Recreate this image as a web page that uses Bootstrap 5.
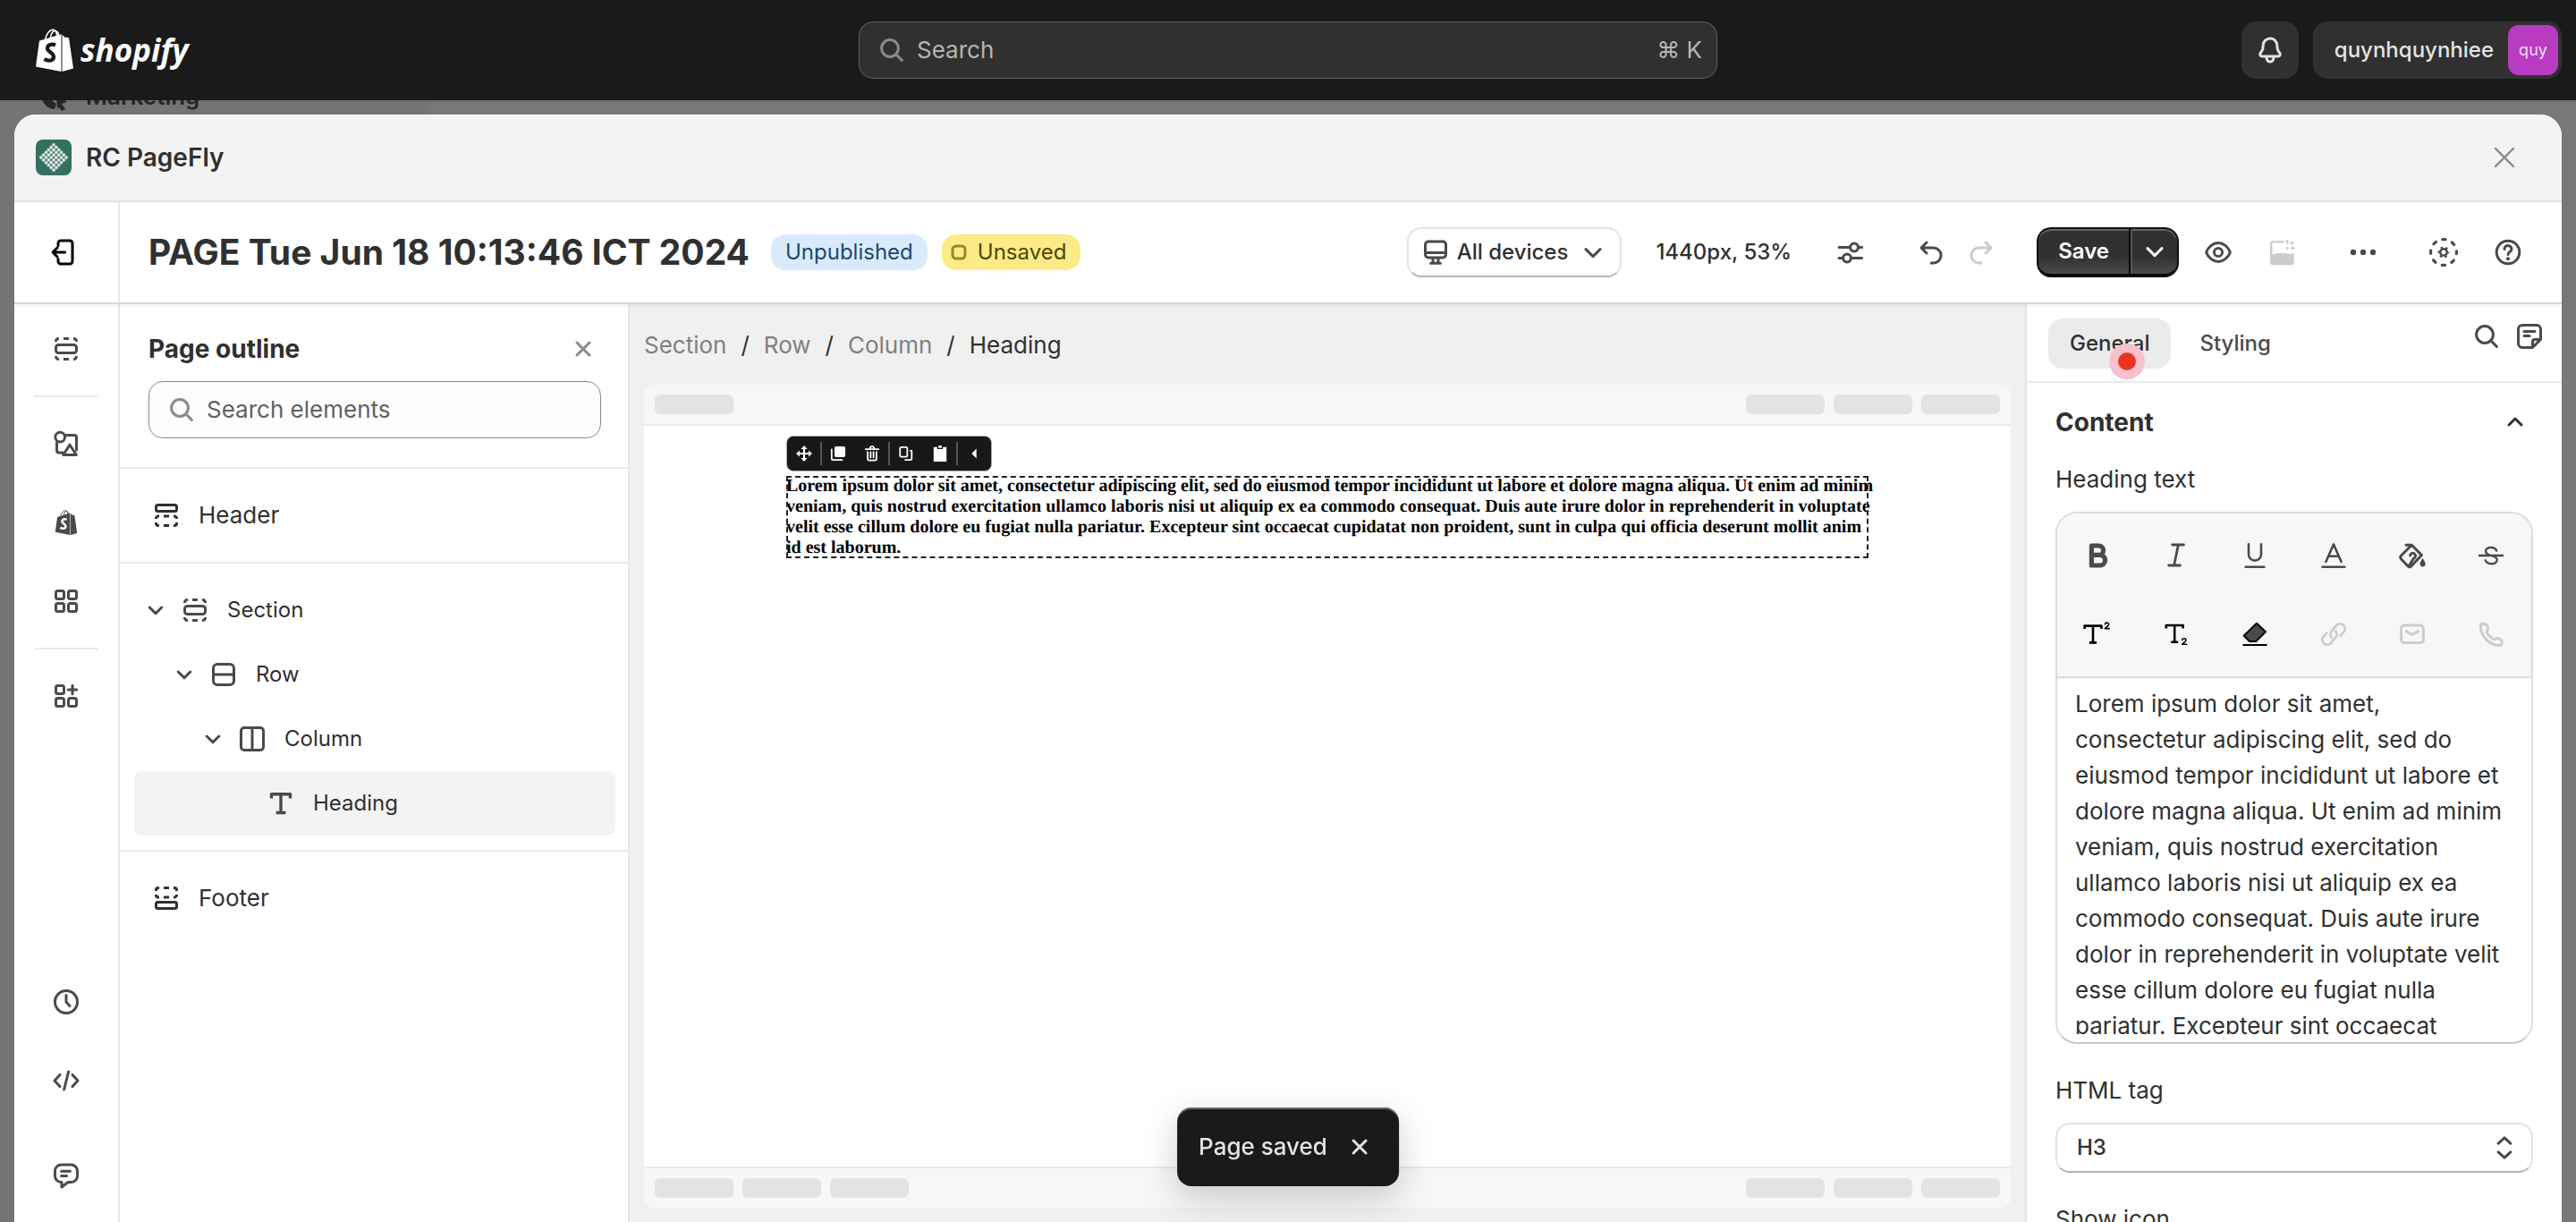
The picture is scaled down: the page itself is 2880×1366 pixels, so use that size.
<!DOCTYPE html>
<html lang="en">
<head>
<meta charset="utf-8">
<meta name="viewport" content="width=device-width, initial-scale=1">
<title>RC PageFly</title>
<link href="https://cdn.jsdelivr.net/npm/bootstrap@5.3.0/dist/css/bootstrap.min.css" rel="stylesheet">
<style>
:root{--ink:#303030;--icon:#4a4a4a;--line:#ebebeb;--muted:#8a8a8a}
body{font-family:Inter,"Liberation Sans",sans-serif;font-size:26px;line-height:32px;color:var(--ink);background:#787878;height:100vh;overflow:hidden}
h1,h2,p{margin:0}
button{color:inherit;font:inherit;background:none;border:0;padding:0}
a{color:inherit;text-decoration:none}
.ico{width:40px;height:40px;flex:none;fill:none;stroke:currentColor;stroke-width:1.5;stroke-linecap:round;stroke-linejoin:round;display:block}
.solid{fill:currentColor;stroke:none}
.t24{font-size:24px}
.fw-mid{font-weight:500}
.gray{color:var(--muted)}
.dim{color:var(--icon)}
/* top bar */
.topbar{height:112px;background:#1a1a1a;padding:0 16px;color:#e3e3e3;display:grid;grid-template-columns:1fr 960px 1fr;flex:none}
.wordmark{font:italic 700 35px/44px "Open Sans",sans-serif;color:#fff}
.top-search{height:64px;border:1px solid #616161;border-radius:16px;background:#303030;padding:0 16px;color:#b5b5b5}
.top-search input,.find-box input{background:none;border:0;outline:0;min-width:0;padding:0;color:inherit}
.top-search input::placeholder{color:#b5b5b5;opacity:1}
.top-btn{height:64px;border-radius:16px;background:#303030}
.bell{width:64px}
.avatar-sq{width:56px;height:56px;border-radius:12px;background:#b83bc1;color:#f6def8;font-size:18px}
/* page behind the dialog */
.backstrip{height:16px;overflow:hidden;background:linear-gradient(#6e6e6e 0 2px,#787878 2px);flex:none;color:#262626;font-weight:600}
.backnav{width:480px;background:linear-gradient(#6c6c6c 0 2px,#747474 2px);padding:0 0 4px 42px}
/* dialog */
.dialog-app{margin:0 16px;background:#fff;border-radius:24px 24px 0 0;overflow:hidden;min-height:0}
.dialog-edge{background:linear-gradient(90deg,#747474 50%,#787878 50%);min-height:0}
.dialog-head{height:98px;background:#f3f3f3;border-bottom:2px solid #e1e1e1;padding:0 44px 0 24px;flex:none}
.app-name{font-weight:600;font-size:28px}
.toolbar-app{height:112px;box-shadow:0 2px 0 #d6d6d6,0 4px 4px rgba(0,0,0,.06);z-index:2;flex:none;padding-right:32px}
.rail-cell{width:118px;border-right:2px solid #e7e7e7;flex:none}
.page-title{font-size:39px;line-height:48px;font-weight:650}
.pill{height:40px;border-radius:16px;padding:0 16px;line-height:40px;font-size:24px}
.pill-info{background:#d9eafd;color:#20496b}
.pill-warn{background:#fceb87;color:#4f4700;padding-left:0}
.pill-warn .ico{color:#998a1c}
.device-btn{height:56px;border-radius:16px;border:2px solid #e3e3e3;border-bottom-color:#b5b5b5;padding:0 10px;font-size:24px;font-weight:500}
.sq{width:56px;height:56px;border-radius:16px;display:flex;align-items:center;justify-content:center;color:var(--icon)}
.tool-gap{gap:34px}
.save-group{height:56px;border-radius:16px;overflow:hidden;color:#fff;background:linear-gradient(#303030 60%,#4b4b4b);border:2px solid #111;border-bottom:4px solid #0a0a0a;box-shadow:inset 0 2px 0 #666}
.save-group .go{padding:0 22px;border-right:2px solid #0c0c0c;font-size:24px;font-weight:600}
.save-group .more{width:52px;border-left:2px solid #555}
/* rail */
.rail{padding:24px 0}
.rail-tools{gap:32px}
.rail-last{margin-top:18px}
.rail hr{width:72px;margin:0;border:0;border-top:2px solid var(--line);opacity:1}
.rail .after-rule{margin:24px 0}
/* outline */
.outline{width:570px;border-right:2px solid #e7e7e7;flex:none}
.outline-top{padding:32px 30px 32px 32px;border-bottom:2px solid var(--line)}
.h-panel{font-size:28px;line-height:40px;font-weight:700}
.find-box{height:64px;border:1px solid #8a8a8a;border-radius:16px;background:#fdfdfd;padding:0 16px;color:#616161;margin-top:16px}
.find-box input::placeholder{color:#616161;opacity:1}
.tree-block{padding:16px 14px 16px 16px;border-bottom:2px solid var(--line)}
.tree-block:last-child{border:0}
.tree-item{height:72px;border-radius:8px;width:100%;text-align:left;padding-left:16px}
.tree-item.on{background:#f3f3f3}
.tree-item .chev{width:20px;height:20px;margin-right:-2px}
.tree-item.lvl-a{padding-left:14px}
.tree-item.lvl-b{padding-left:46px}
.tree-item.lvl-c{padding-left:78px}
.tree-item.lvl-d{padding-left:144px}
/* canvas */
.canvas{background:#f0f0f0;padding:24px 16px 16px;min-width:0}
.crumbs{height:48px;color:#808080;gap:16px;margin:0 0 20px;padding:0;list-style:none}
.crumbs .sep,.crumbs .here{color:var(--ink)}
.frame{background:#fff;border-radius:12px;overflow:hidden}
.frame-bar{height:46px;background:#f7f7f7;padding:0 12px;gap:10px;flex:none}
.frame-bar.at-top{border-bottom:2px solid var(--line)}
.frame-bar.at-end{border-top:2px solid var(--line)}
.frame-bar i{width:88px;height:22px;border-radius:6px;background:#e3e3e3}
.preview{padding:56px 159px 0;position:relative}
.float-tools{position:absolute;left:159px;top:11px;height:40px;border-radius:8px;background:#17181a;border:1px solid #aaa;color:#fff}
.float-tools button{width:38px;height:38px;display:flex;align-items:center;justify-content:center}
.float-tools .ico{width:18px;height:18px}
.float-tools .cut{border-left:2px solid #55565a;height:26px;margin:0 -1px}
.sel-box{outline:2px dashed #222;outline-offset:-2px}
.sel-text{font:700 20px/23px "Liberation Serif",serif;color:#000;margin-right:-8px;text-rendering:geometricPrecision}
/* inspector */
.inspector{width:600px;border-left:2px solid #e3e3e3;flex:none;overflow:hidden}
.tabs-app{height:90px;padding:18px 16px 0 24px;border-bottom:2px solid var(--line);gap:8px;flex:none}
.tab-btn{height:56px;border-radius:16px;padding:0 24px;font-size:24px;font-weight:500;color:var(--icon);position:relative}
.tab-btn.on{background:#ebebeb;color:var(--ink)}
.click-dot{position:absolute;left:68px;top:28px;width:40px;height:40px;border-radius:50%;background:#f6c1cd}
.click-dot::after{content:"";position:absolute;inset:10px;border-radius:50%;background:#ec3323}
.form-app{padding:24px 32px 0}
.form-app label{display:block}
.form-head{margin-bottom:28px}
.form-gap{margin-top:36px}
.editor{border:2px solid #dcdcdc;border-bottom-color:#c9c9c9;border-radius:24px;overflow:hidden;margin-top:20px}
.editor-tools{background:#f7f7f7;border-bottom:2px solid #dcdcdc;display:grid;grid-template-columns:repeat(6,88px);justify-content:center;padding:3px 0}
.editor-tools button{height:88px;display:flex;align-items:center;justify-content:center;color:var(--icon)}
.editor-tools .ink{color:#000}
.editor-tools .off,.off{color:#cccccc}
.editor textarea{display:block;width:100%;height:398px;border:0;outline:0;resize:none;overflow:hidden;padding:9px 18px 0 20px;line-height:40px;color:inherit;margin-bottom:9px}
.pick{height:56px;border:2px solid #e3e3e3;border-bottom-color:#b5b5b5;border-radius:16px;margin-top:20px;padding-right:10px;color:var(--icon)}
.pick select{appearance:none;border:0;background:none;outline:0;padding:0 0 0 22px;font-size:24px;font-weight:500;color:var(--ink);height:100%}
/* toast */
.toast-app{position:fixed;left:50%;transform:translateX(-50%);bottom:40px;height:88px;border-radius:16px;background:#1a1a1a;color:#e3e3e3;padding:0 24px;gap:16px;box-shadow:inset 0 2px 0 #666,0 12px 40px rgba(0,0,0,.2);z-index:5;font-weight:500}
</style>
<script src="https://cdn.jsdelivr.net/npm/bootstrap@5.3.0/dist/js/bootstrap.bundle.min.js"></script>
</head>
<body class="d-flex flex-column">

<svg class="d-none" aria-hidden="true">
  <symbol id="i-search" viewBox="0 0 20 20"><circle cx="9" cy="9" r="4.7"/><path d="M12.6 12.6l3.1 3.1"/></symbol>
  <symbol id="i-x" viewBox="0 0 20 20"><path d="M6.5 6.5l7 7M13.5 6.5l-7 7"/></symbol>
  <symbol id="i-xl" viewBox="0 0 20 20"><path stroke-width="1.2" d="M5 5l10 10M15 5L5 15"/></symbol>
  <symbol id="i-down" viewBox="0 0 20 20"><path d="M6 8.300l4 4 4-4"/></symbol>
  <symbol id="i-up" viewBox="0 0 20 20"><path d="M6.500 11.500l3.500-3.500 3.500 3.500"/></symbol>
  <symbol id="i-chev" viewBox="0 0 10 10"><path d="M1.600 3.500l3.400 3.400 3.400-3.400"/></symbol>
  <symbol id="i-section" viewBox="0 0 20 20"><rect x="4.250" y="7.750" width="11.500" height="4.500" rx="1.500"/><path stroke-linecap="butt" d="M4.250 6v-.25a1.500 1.500 0 0 1 1.500-1.500H6M8.500 4.250h3M14 4.250h.25a1.500 1.500 0 0 1 1.500 1.500V6M4.250 14v.25a1.500 1.500 0 0 0 1.500 1.500H6M8.500 15.750h3M14 15.750h.25a1.500 1.500 0 0 0 1.500-1.500V14"/></symbol>
  <symbol id="i-header" viewBox="0 0 20 20"><rect x="4.250" y="4.250" width="11.500" height="3.500" rx="1"/><path stroke-linecap="butt" d="M4.250 12v-.25a1.200 1.200 0 0 1 1.200-1.200H6M8.500 10.500h3M14 10.500h.55a1.200 1.200 0 0 1 1.200 1.200V12M4.250 14v.5a1.250 1.250 0 0 0 1.250 1.250H6M8.500 15.750h3M14 15.750h.5a1.250 1.250 0 0 0 1.250-1.250V14"/></symbol>
  <symbol id="i-footer" viewBox="0 0 20 20"><rect x="4.250" y="12.250" width="11.500" height="3.500" rx="1"/><path stroke-linecap="butt" d="M4.250 6v-.5A1.250 1.250 0 0 1 5.500 4.250H6M8.500 4.250h3M14 4.250h.5a1.250 1.250 0 0 1 1.250 1.250V6M4.250 8v.3a1.200 1.200 0 0 0 1.200 1.200H6M8.500 9.500h3M14 9.500h.55a1.200 1.200 0 0 0 1.200-1.200V8"/></symbol>
  <symbol id="i-row" viewBox="0 0 20 20"><rect x="4.250" y="4.250" width="11.500" height="11.500" rx="2.250"/><path d="M4.250 10h11.500"/></symbol>
  <symbol id="i-col" viewBox="0 0 20 20"><rect x="3.750" y="3.750" width="12.500" height="12.500" rx="1.750"/><path d="M10 3.750v12.500"/></symbol>
  <symbol id="i-text" viewBox="0 0 20 20"><path stroke-linecap="butt" d="M4.750 7.300V4.850h10.500V7.300M10 4.850v10.400M7.300 15.250h5.400" stroke-width="1.700"/></symbol>
  <symbol id="i-shapes" viewBox="0 0 20 20"><circle cx="6.600" cy="6.300" r="2.700"/><path d="M9.700 5.250h4.800a1.250 1.250 0 0 1 1.250 1.250v7M4.750 9.500v4.300a1.250 1.250 0 0 0 1.250 1.250h2.200M12 10.600l3.700 5.650H8.400z"/></symbol>
  <symbol id="i-grid" viewBox="0 0 20 20"><rect x="4.250" y="4.250" width="4.500" height="4.500" rx="1"/><rect x="11.250" y="4.250" width="4.500" height="4.500" rx="1"/><rect x="4.250" y="11.250" width="4.500" height="4.500" rx="1"/><rect x="11.250" y="11.250" width="4.500" height="4.500" rx="1"/></symbol>
  <symbol id="i-gridplus" viewBox="0 0 20 20"><rect x="4.250" y="4.250" width="4.500" height="4.500" rx="1"/><path d="M13.500 4.100v4.800M11.100 6.500h4.800"/><rect x="4.250" y="11.250" width="4.500" height="4.500" rx="1"/><rect x="11.250" y="11.250" width="4.500" height="4.500" rx="1"/></symbol>
  <symbol id="i-bag" viewBox="0 0 42 48"><path d="M4 13.500l24.500-7.300V48L0 42.500z" fill="currentColor" stroke="none"/><path d="M29.500 6.500l2.500 3 5 .8 5 34.200L29.500 48z" fill="currentColor" stroke="none"/><path d="M10.500 13C11.500 6 15.500 1.200 19 1.200S24 6 23.700 9M16.500 10c.5-5 3-8 5.500-7.500s3.500 2.500 3.500 5.500" fill="none" stroke="currentColor" stroke-width="1.600"/><path d="M22 18.500c-4-2-9-.5-9 3.500s7 4.500 7 9.500c0 4.500-6 5.500-10.500 2.500" fill="none" stroke-width="4.200" stroke-linecap="butt"/></symbol>
  <symbol id="i-clock" viewBox="0 0 20 20"><circle cx="10" cy="10" r="6.250"/><path d="M10 6.300V10l2 2.200"/></symbol>
  <symbol id="i-code" viewBox="0 0 20 20"><path d="M6.500 6.700L3.500 10l3 3.300M13.500 6.700l3 3.300-3 3.300M11.300 5L8.800 15"/></symbol>
  <symbol id="i-chat" viewBox="0 0 20 20"><path d="M7.500 13.750h-.2A3.500 3.500 0 0 1 3.750 10.250V7.500A3.500 3.500 0 0 1 7.250 4h5.500a3.500 3.500 0 0 1 3.500 3.500v2.750a3.500 3.500 0 0 1-3.500 3.500H11L7.500 16.500z"/><path d="M7.300 7.600h4.900M7.300 10.300h3"/></symbol>
  <symbol id="i-exit" viewBox="0 0 20 20"><path d="M7.500 6.300V5a1.500 1.500 0 0 1 1.500-1.500h5A1.500 1.500 0 0 1 15.500 5v10a1.500 1.500 0 0 1-1.500 1.500H9A1.500 1.500 0 0 1 7.500 15v-1.300M11.300 10H4.600M7 7.500L4.500 10 7 12.500"/></symbol>
  <symbol id="i-bell" viewBox="0 0 20 20"><path d="M10 3.500a3.900 3.900 0 0 0-3.900 3.700l-.15 1.900c-.05.6-.25 1-.6 1.500l-.75 1.100c-.5.800 0 1.800.9 1.800h9c.900 0 1.400-1 .9-1.800l-.75-1.100c-.35-.5-.55-.9-.6-1.500l-.15-1.900A3.900 3.900 0 0 0 10 3.500zM8.100 13.600v1a1.900 1.900 0 0 0 3.800 0v-1"/></symbol>
  <symbol id="i-monitor" viewBox="0 0 20 20"><rect x="4.250" y="4" width="11.500" height="9" rx="1.750"/><path d="M4.300 10.200h11.400M8.500 13.500v2M11.500 13.500v2M7.300 16.100h5.400"/></symbol>
  <symbol id="i-sliders" viewBox="0 0 20 20"><path d="M3.500 7.250h6.200M14.500 7.250h1.800M3.500 13.250h2M10.800 13.250h5.500"/><circle cx="12" cy="7.250" r="2.200"/><circle cx="8" cy="13.250" r="2.200"/></symbol>
  <symbol id="i-undo" viewBox="0 0 20 20"><path d="M7.500 4.500L4.500 7.500l3 3M4.700 7.500h6.600a4.200 4.200 0 0 1 0 8.500h-1.200"/></symbol>
  <symbol id="i-redo" viewBox="0 0 20 20"><path d="M12.500 4.500l3 3-3 3M15.300 7.500H8.700a4.200 4.200 0 0 0 0 8.500h1.200"/></symbol>
  <symbol id="i-eye" viewBox="0 0 20 20"><path d="M3.300 10c1.100-2.900 3.700-5.200 6.700-5.200s5.600 2.300 6.700 5.200c-1.100 2.900-3.700 5.200-6.700 5.200S4.400 12.900 3.300 10z"/><circle cx="10" cy="10" r="2.300"/></symbol>
  <symbol id="i-pic" viewBox="0 0 20 20"><path stroke-width="1.200" stroke-linecap="butt" d="M11 4.200H4.600a1 1 0 0 0-1 1V14M15.700 14v-3.500"/><path class="solid" d="M3 11.900c3.500-2 9.700-2 13.300 0v4a1.200 1.200 0 0 1-1.200 1.200H4.200A1.200 1.200 0 0 1 3 15.900z"/><path stroke-width="1.300" stroke-linecap="butt" d="M12.600 3v2.300M16 4l-1.600 1.500M14.600 7.700h2M12 7.700h1.300"/></symbol>
  <symbol id="i-dots" viewBox="0 0 20 20"><circle class="solid" cx="4.500" cy="10" r="1.600"/><circle class="solid" cx="10" cy="10" r="1.600"/><circle class="solid" cx="15.500" cy="10" r="1.600"/></symbol>
  <symbol id="i-gear" viewBox="0 0 20 20"><circle cx="10" cy="10" r="7.200" stroke-width="1.600" stroke-dasharray="1.700 3.955" stroke-dashoffset=".85"/><circle cx="10" cy="10" r="1.900" stroke-width="1.300"/><circle cx="10" cy="10" r="2.800" stroke-width="1" stroke-linecap="butt" stroke-dasharray="1.200 1.732" stroke-dashoffset=".6"/></symbol>
  <symbol id="i-help" viewBox="0 0 20 20"><circle cx="10" cy="10" r="6.400"/><path d="M8 8.200c0-2.700 4-2.500 4 0 0 1.500-2 1.500-2 3.100"/><circle class="solid" cx="10" cy="13.600" r="1"/></symbol>
  <symbol id="i-note" viewBox="0 0 20 20"><path d="M11.700 16.250H6A2.250 2.250 0 0 1 3.750 14V6A2.250 2.250 0 0 1 6 3.750h8A2.250 2.250 0 0 1 16.250 6v5.700zM11.750 16v-3a1.250 1.250 0 0 1 1.250-1.250h3M7 7.250h6M7 9.750h3"/></symbol>
  <symbol id="i-updown" viewBox="0 0 20 20"><path d="M6.600 7.600L10 4.400l3.400 3.200M6.600 12.400l3.400 3.200 3.400-3.200"/></symbol>
  <symbol id="i-bold" viewBox="0 0 20 20"><path stroke-width="2.600" d="M6.700 4.500h4a2.600 2.600 0 0 1 0 5.200h-4zM6.700 9.700h4.700a2.900 2.900 0 0 1 0 5.800H6.700z"/></symbol>
  <symbol id="i-italic" viewBox="0 0 20 20"><path stroke-width="1.400" d="M7.800 4h6.400M5.800 15.500h6.400M11.200 4L8.800 15.500"/></symbol>
  <symbol id="i-under" viewBox="0 0 20 20"><path stroke-width="1.300" d="M6.500 3.700v5.600a3.500 3.500 0 0 0 7 0V3.700M4.800 16.400h10.400"/></symbol>
  <symbol id="i-color" viewBox="0 0 20 20"><path stroke-width="1.300" d="M5.700 13.500L10 3.700l4.300 9.800M7.200 10.400h5.600M3.800 16.400h12.400"/></symbol>
  <symbol id="i-fill" viewBox="0 0 20 20"><path d="M6.500 4.100h3.200l5.500 5.700-5.800 6.200a1.300 1.300 0 0 1-1.800 0L3.800 12a1.500 1.500 0 0 1 0-2l5-5M11 11.500a1.500 1.500 0 1 0-2.200-1.500M8.300 15.500l2.500-4"/><path class="solid" d="M15.800 11.500c.8 1.300 1.500 2.200 1.500 3.300a1.500 1.500 0 0 1-3 0c0-1.100.7-2 1.500-3.300z"/></symbol>
  <symbol id="i-strike" viewBox="0 0 20 20"><path stroke-width="1.200" stroke-linecap="butt" d="M3 10h14M13.200 7.800C12.800 4.800 7 4.800 7 7.600c0 3.200 6.400 1.800 6.400 4.800 0 3-6.400 3-6.600-.2"/></symbol>
  <symbol id="i-sup" viewBox="-1.200 0 20 20"><path stroke-width="1.300" stroke-linecap="butt" d="M1.600 7V5.300h9.400V7M6.300 5.300v9.500M4.300 14.700h4"/><path stroke-width=".8" d="M13 4.400c.2-1.200 2.200-1 2.100.1 0 .8-1.300 1.200-2.100 2.300h2.400"/></symbol>
  <symbol id="i-sub" viewBox="-1.200 0 20 20"><path stroke-width="1.300" stroke-linecap="butt" d="M3.200 6.700V5h9.400v1.700M7.900 5v9.500M5.900 14.400h4"/><path stroke-width=".8" d="M12.200 13.200c.2-1.200 2.200-1 2.100.1 0 .8-1.300 1.200-2.100 2.300h2.400"/></symbol>
  <symbol id="i-erase" viewBox="0 0 20 20"><path d="M11 3.900l5 4.700-5.400 5.400H7l-3.200-3.200z" fill="#4a4a4a" stroke-width="1"/><path stroke-width="1" d="M3.600 16h12.800"/></symbol>
  <symbol id="i-link" viewBox="0 0 20 20"><path stroke-width="1.400" d="M8.800 11.700a2.800 2.800 0 0 1 .3-3.700l2.500-3a2.700 2.700 0 0 1 4 3.800l-1.800 2M11.200 8.300a2.800 2.800 0 0 1-.3 3.700l-2.500 3a2.700 2.700 0 0 1-4-3.800l1.800-2"/></symbol>
  <symbol id="i-mail" viewBox="0 0 20 20"><rect x="3.800" y="5" width="12.400" height="9.800" rx="1.700"/><path d="M6.600 8.300L10 10.200l3.400-1.900"/></symbol>
  <symbol id="i-phone" viewBox="0 0 20 20"><path d="M4.200 5.300c-.2 5.700 5 11 10.500 10.900.9 0 1.300-.6 1.400-1.500.1-1.500-.4-1.900-1.500-2.300-1.600-.6-2 .3-2.700.4-1.200.1-4.300-3-4.200-4.200.1-.7 1-1.200.4-2.700-.4-1.100-.8-1.800-2.300-1.800-1 0-1.600.4-1.600 1.200z"/></symbol>
  <symbol id="i-move" viewBox="0 0 20 20"><path class="solid" d="M10 0l4 4.500h-2.800v4.300h4.300V6L20 10l-4.500 4v-2.800h-4.300v4.300H14L10 20l-4-4.500h2.800v-4.300H4.500V14L0 10l4.500-4v2.800h4.300V4.500H6z"/></symbol>
  <symbol id="i-dup" viewBox="0 0 20 20"><rect class="solid" x="5.500" y="1" width="13.500" height="13.500" rx="2"/><path stroke-width="2" d="M2 5v11a2 2 0 0 0 2 2h11"/></symbol>
  <symbol id="i-trash" viewBox="0 0 20 20"><path stroke-width="2" d="M2 4.500h16M7.500 3.500c0-3 5-3 5 0M4.500 8v8.500a2 2 0 0 0 2 2h7a2 2 0 0 0 2-2V8M8.200 8v7M11.800 8v7"/></symbol>
  <symbol id="i-copy" viewBox="0 0 20 20"><rect x="2.500" y="2" width="9" height="12" rx="1.500" stroke-width="2"/><path stroke-width="2" d="M15.500 6.500h1.500v10a1.500 1.500 0 0 1-1.500 1.500H9"/></symbol>
  <symbol id="i-paste" viewBox="0 0 20 20"><path class="solid" d="M2 2h4.500v2.500h7V2H18v18H2z"/><rect class="solid" x="8" y="0" width="4" height="3"/></symbol>
  <symbol id="i-left" viewBox="0 0 20 20"><path class="solid" d="M13 4v12l-6-6z"/></symbol>
</svg>

<header class="topbar align-items-center">
  <a href="#" class="d-flex align-items-center gap-2 ps-4" aria-label="Shopify home">
    <svg class="text-white" width="42" height="48" viewBox="0 0 42 48"><use href="#i-bag" stroke="#1a1a1a"/></svg>
    <span class="wordmark">shopify</span>
  </a>
  <label class="top-search d-flex align-items-center gap-2">
    <svg class="ico gray"><use href="#i-search"/></svg>
    <input class="flex-grow-1" type="text" placeholder="Search" aria-label="Search">
    <span>⌘ K</span>
  </label>
  <div class="d-flex justify-content-end gap-3">
    <button class="top-btn bell d-flex align-items-center justify-content-center" aria-label="Notifications"><svg class="ico"><use href="#i-bell"/></svg></button>
    <button class="top-btn fw-mid t24 d-flex align-items-center gap-3 ps-4 pe-1">quynhquynhiee<span class="avatar-sq d-flex align-items-center justify-content-center fw-normal">quy</span></button>
  </div>
</header>

<div class="backstrip d-flex">
  <div class="backnav d-flex align-items-end gap-3">
    <svg width="38" height="34" viewBox="0 0 38 34" fill="#262626"><path d="M5 18a14 14 0 0 0 14 14l2-6-4-3-4-5z"/><path d="M21 16l12 8-6 2 4 6-4 2-4-5-1 5z"/></svg>
    <span>Marketing</span>
  </div>
</div>

<div class="dialog-edge d-flex flex-column flex-grow-1">
<main class="dialog-app d-flex flex-column flex-grow-1">
  <div class="dialog-head d-flex align-items-center">
    <svg width="40" height="40" viewBox="0 0 40 40"><defs><pattern id="weave" x="8" y="8" width="4" height="4" patternUnits="userSpaceOnUse"><circle cx="2" cy="2" r="1.700" fill="#fff"/></pattern></defs><rect width="40" height="40" rx="8" fill="#356f60"/><rect x="8" y="8" width="24" height="24" transform="rotate(45 20 20)" fill="url(#weave)"/></svg>
    <span class="app-name ms-3 me-auto">RC PageFly</span>
    <button class="gray" aria-label="Close"><svg class="ico"><use href="#i-xl"/></svg></button>
  </div>

  <div class="toolbar-app d-flex align-items-stretch position-relative">
    <div class="rail-cell d-flex align-items-center justify-content-center pe-2"><button class="text-black" aria-label="Exit"><svg class="ico"><use href="#i-exit"/></svg></button></div>
    <div class="d-flex align-items-center gap-3 ps-4 ms-2 me-auto">
      <h1 class="page-title me-2">PAGE Tue Jun 18 10:13:46 ICT 2024</h1>
      <span class="pill pill-info">Unpublished</span>
      <span class="pill pill-warn d-flex align-items-center"><svg class="ico" viewBox="0 0 40 40"><rect x="12" y="13" width="14" height="14" rx="4" stroke-width="3"/></svg>Unsaved</span>
    </div>
    <div class="d-flex align-items-center tool-gap">
      <button class="device-btn d-flex align-items-center"><svg class="ico me-1 dim"><use href="#i-monitor"/></svg>All devices<svg class="ico ms-2 dim"><use href="#i-down"/></svg></button>
      <span class="t24 fw-mid px-1">1440px, 53%</span>
      <button class="sq" aria-label="Settings"><svg class="ico"><use href="#i-sliders"/></svg></button>
      <div class="d-flex">
        <button class="sq" aria-label="Undo"><svg class="ico"><use href="#i-undo"/></svg></button>
        <button class="sq off" aria-label="Redo" disabled><svg class="ico"><use href="#i-redo"/></svg></button>
      </div>
      <div class="d-flex gap-3">
        <div class="save-group d-flex">
          <button class="go">Save</button>
          <button class="more d-flex align-items-center justify-content-center" aria-label="More save actions"><svg class="ico"><use href="#i-down"/></svg></button>
        </div>
        <button class="sq" aria-label="Preview"><svg class="ico"><use href="#i-eye"/></svg></button>
        <button class="sq off" aria-label="Image optimizer" disabled><svg class="ico"><use href="#i-pic"/></svg></button>
      </div>
      <button class="sq" aria-label="More"><svg class="ico"><use href="#i-dots"/></svg></button>
      <div class="d-flex gap-3">
        <button class="sq" aria-label="Page settings"><svg class="ico"><use href="#i-gear"/></svg></button>
        <button class="sq" aria-label="Help"><svg class="ico"><use href="#i-help"/></svg></button>
      </div>
    </div>
  </div>

  <div class="d-flex flex-grow-1 overflow-hidden">
    <nav class="rail rail-cell d-flex flex-column align-items-center">
      <button class="sq" aria-label="Outline"><svg class="ico"><use href="#i-section"/></svg></button>
      <hr class="after-rule">
      <div class="rail-tools d-flex flex-column">
        <button class="sq" aria-label="Elements"><svg class="ico"><use href="#i-shapes"/></svg></button>
        <button class="sq" aria-label="Shopify elements"><svg width="26" height="28" viewBox="0 0 42 48"><use href="#i-bag" stroke="#fff"/></svg></button>
        <button class="sq" aria-label="Apps"><svg class="ico"><use href="#i-grid"/></svg></button>
      </div>
      <hr class="after-rule">
      <button class="sq" aria-label="Add apps"><svg class="ico"><use href="#i-gridplus"/></svg></button>
      <div class="rail-tools d-flex flex-column mt-auto">
        <button class="sq" aria-label="History"><svg class="ico"><use href="#i-clock"/></svg></button>
        <button class="sq" aria-label="Code"><svg class="ico"><use href="#i-code"/></svg></button>
        <button class="sq rail-last" aria-label="Feedback"><svg class="ico"><use href="#i-chat"/></svg></button>
      </div>
    </nav>

    <aside class="outline">
      <div class="outline-top">
        <div class="d-flex align-items-center justify-content-between">
          <h2 class="h-panel">Page outline</h2>
          <button class="gray" aria-label="Close outline"><svg class="ico"><use href="#i-x"/></svg></button>
        </div>
        <label class="find-box d-flex align-items-center gap-2">
          <svg class="ico gray"><use href="#i-search"/></svg>
          <input class="flex-grow-1" type="text" placeholder="Search elements" aria-label="Search elements">
        </label>
      </div>
      <div class="tree-block"><button class="tree-item d-flex align-items-center gap-3"><svg class="ico"><use href="#i-header"/></svg>Header</button></div>
      <div class="tree-block t24">
        <button class="tree-item lvl-a d-flex align-items-center gap-3"><svg class="ico chev dim"><use href="#i-chev"/></svg><svg class="ico dim"><use href="#i-section"/></svg>Section</button>
        <button class="tree-item lvl-b d-flex align-items-center gap-3"><svg class="ico chev dim"><use href="#i-chev"/></svg><svg class="ico dim"><use href="#i-row"/></svg>Row</button>
        <button class="tree-item lvl-c d-flex align-items-center gap-3"><svg class="ico chev dim"><use href="#i-chev"/></svg><svg class="ico dim"><use href="#i-col"/></svg>Column</button>
        <button class="tree-item lvl-d on d-flex align-items-center gap-3"><svg class="ico dim"><use href="#i-text"/></svg>Heading</button>
      </div>
      <div class="tree-block"><button class="tree-item d-flex align-items-center gap-3"><svg class="ico"><use href="#i-footer"/></svg>Footer</button></div>
    </aside>

    <section class="canvas d-flex flex-column flex-grow-1">
      <ol class="crumbs d-flex align-items-center">
        <li><a href="#">Section</a></li><li class="sep">/</li><li><a href="#">Row</a></li><li class="sep">/</li><li><a href="#">Column</a></li><li class="sep">/</li><li class="here">Heading</li>
      </ol>
      <div class="frame d-flex flex-column flex-grow-1">
        <div class="frame-bar at-top d-flex align-items-center"><i class="me-auto"></i><i></i><i></i><i></i></div>
        <div class="preview flex-grow-1">
          <div class="float-tools d-flex align-items-center">
            <button aria-label="Move"><svg class="ico"><use href="#i-move"/></svg></button><span class="cut"></span>
            <button aria-label="Duplicate"><svg class="ico"><use href="#i-dup"/></svg></button>
            <button aria-label="Delete"><svg class="ico"><use href="#i-trash"/></svg></button><span class="cut"></span>
            <button aria-label="Copy"><svg class="ico"><use href="#i-copy"/></svg></button>
            <button aria-label="Paste"><svg class="ico"><use href="#i-paste"/></svg></button><span class="cut"></span>
            <button aria-label="Collapse"><svg class="ico"><use href="#i-left"/></svg></button>
          </div>
          <div class="sel-box"><p class="sel-text">Lorem ipsum dolor sit amet, consectetur adipiscing elit, sed do eiusmod tempor incididunt ut labore et dolore magna aliqua. Ut enim ad minim veniam, quis nostrud exercitation ullamco laboris nisi ut aliquip ex ea commodo consequat. Duis aute irure dolor in reprehenderit in voluptate velit esse cillum dolore eu fugiat nulla pariatur. Excepteur sint occaecat cupidatat non proident, sunt in culpa qui officia deserunt mollit anim id est laborum.</p></div>
        </div>
        <div class="frame-bar at-end d-flex align-items-center"><i></i><i></i><i class="me-auto"></i><i></i><i></i><i></i></div>
      </div>
    </section>

    <aside class="inspector">
      <div class="tabs-app d-flex">
        <button class="tab-btn on">General<span class="click-dot"></span></button>
        <button class="tab-btn me-auto">Styling</button>
        <button class="align-self-start dim" aria-label="Search settings"><svg class="ico"><use href="#i-search"/></svg></button>
        <button class="align-self-start dim" aria-label="Notes"><svg class="ico"><use href="#i-note"/></svg></button>
      </div>
      <div class="form-app">
        <div class="form-head d-flex align-items-center justify-content-between">
          <h2 class="h-panel">Content</h2>
          <button aria-label="Collapse content"><svg class="ico"><use href="#i-up"/></svg></button>
        </div>
        <label for="htext">Heading text</label>
        <div class="editor">
          <div class="editor-tools">
            <button aria-label="Bold"><svg class="ico"><use href="#i-bold"/></svg></button>
            <button aria-label="Italic"><svg class="ico"><use href="#i-italic"/></svg></button>
            <button aria-label="Underline"><svg class="ico"><use href="#i-under"/></svg></button>
            <button aria-label="Text color"><svg class="ico"><use href="#i-color"/></svg></button>
            <button aria-label="Highlight"><svg class="ico"><use href="#i-fill"/></svg></button>
            <button aria-label="Strikethrough"><svg class="ico"><use href="#i-strike"/></svg></button>
            <button class="ink" aria-label="Superscript"><svg class="ico"><use href="#i-sup"/></svg></button>
            <button class="ink" aria-label="Subscript"><svg class="ico"><use href="#i-sub"/></svg></button>
            <button class="ink" aria-label="Clear formatting"><svg class="ico"><use href="#i-erase"/></svg></button>
            <button class="off" aria-label="Link" disabled><svg class="ico"><use href="#i-link"/></svg></button>
            <button class="off" aria-label="Email" disabled><svg class="ico"><use href="#i-mail"/></svg></button>
            <button class="off" aria-label="Phone" disabled><svg class="ico"><use href="#i-phone"/></svg></button>
          </div>
          <textarea id="htext">Lorem ipsum dolor sit amet, consectetur adipiscing elit, sed do eiusmod tempor incididunt ut labore et dolore magna aliqua. Ut enim ad minim veniam, quis nostrud exercitation ullamco laboris nisi ut aliquip ex ea commodo consequat. Duis aute irure dolor in reprehenderit in voluptate velit esse cillum dolore eu fugiat nulla pariatur. Excepteur sint occaecat</textarea>
        </div>
        <label for="tag" class="form-gap">HTML tag</label>
        <div class="pick d-flex align-items-center">
          <select id="tag" class="flex-grow-1"><option>H3</option></select>
          <svg class="ico"><use href="#i-updown"/></svg>
        </div>
        <div class="form-gap">Show icon</div>
      </div>
    </aside>
  </div>
</main>
</div>

<div class="toast-app d-flex align-items-center" role="status">Page saved<button aria-label="Dismiss"><svg class="ico"><use href="#i-x"/></svg></button></div>
</body>
</html>
